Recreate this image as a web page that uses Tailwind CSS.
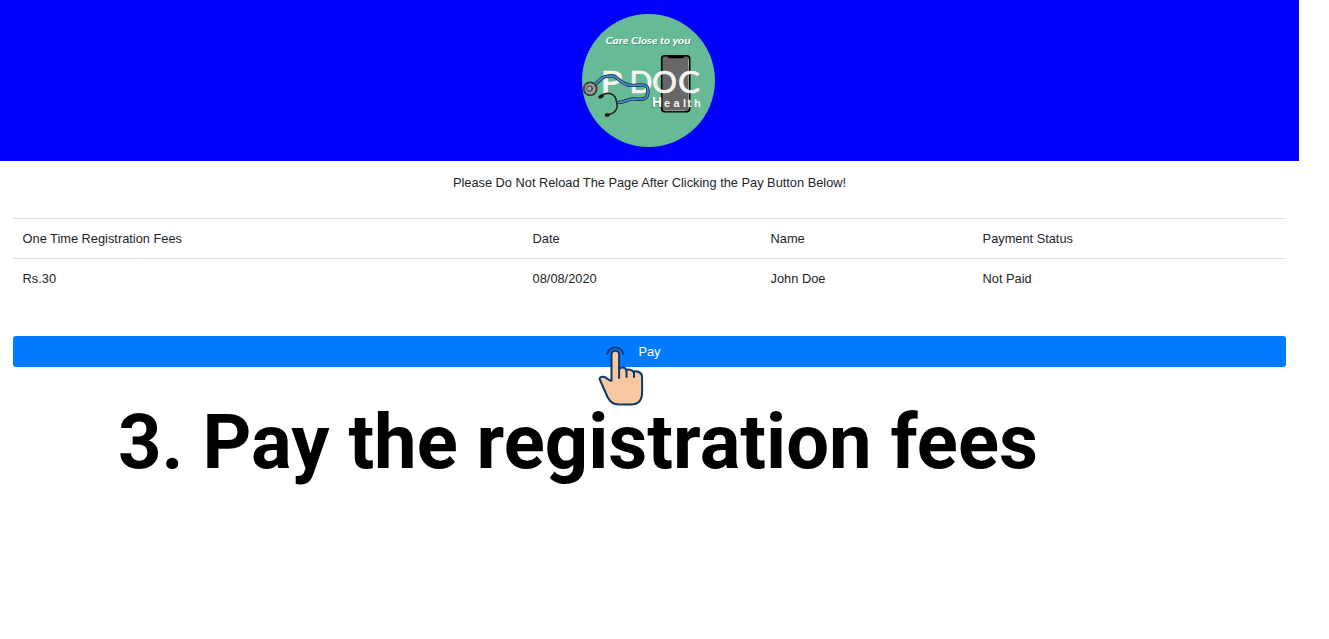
<!DOCTYPE html>
<html lang="en">
<head>
<meta charset="utf-8">
<title>P DOC Health</title>
<script src="https://cdn.jsdelivr.net/npm/@tailwindcss/browser@4"></script>
</head>
<body class="h-[639px] overflow-hidden bg-white font-['Liberation_Sans',sans-serif] text-[12.8px] leading-[19px] text-[#212529]">
<div class="w-[1299px]">
  <header class="flex h-[161px] justify-center bg-[#0000ff] pt-[14px] pr-[2px]">
    <svg class="h-[133px] w-[133px]" viewBox="582 14 133 133" fill="none" stroke-linecap="round" stroke-linejoin="round">
      <defs>
        <radialGradient id="disc"><stop offset="0" stop-color="#ddd"/><stop offset=".35" stop-color="#777"/><stop offset=".6" stop-color="#aaa"/><stop offset="1" stop-color="#333"/></radialGradient>
      </defs>
      <circle cx="648.5" cy="80.5" r="66.5" fill="#66bb96"/>
      <g font-family="Lato, sans-serif" font-style="italic" font-weight="700" font-size="10">
        <text x="606.5" y="45" fill="#4d9777" textLength="85" lengthAdjust="spacingAndGlyphs">Care Close to you</text>
        <text x="605.5" y="44" fill="#fff" textLength="85" lengthAdjust="spacingAndGlyphs">Care Close to you</text>
      </g>
      <rect x="661.7" y="55.7" width="28" height="56" rx="3" fill="#666" stroke="#000" stroke-width="1.6"/>
      <path d="M667 56h18l-2 2.2h-14z" fill="#000"/>
      <path d="M688.5 59.500v49M665 110.700h20" stroke="#ccc" stroke-width=".6"/>
      <g fill="#f5f5f3" stroke="#f5f5f3" stroke-width=".7" font-family="Lato, sans-serif" font-size="31">
        <text x="600.5" y="93" textLength="22" lengthAdjust="spacingAndGlyphs">P</text>
        <text x="629.5" y="93" textLength="23" lengthAdjust="spacingAndGlyphs">D</text>
        <text x="652" y="93" textLength="25" lengthAdjust="spacingAndGlyphs">O</text>
        <text x="678" y="93" textLength="22" lengthAdjust="spacingAndGlyphs">C</text>
      </g>
      <path d="M593 87C600 80 601 76.500 609 76C619 75 617 82 628 85C636 87 648 81 648 91C648 99 644 100 635 99C628 98 625 103 618 102.500" stroke="#182636" stroke-width="3.400"/>
      <path d="M593 87C600 80 601 76.500 609 76C619 75 617 82 628 85C636 87 648 81 648 91C648 99 644 100 635 99C628 98 625 103 618 102.500" stroke="#448bd0" stroke-width="2"/>
      <path d="M601 96.500C607 90 616 94 616.500 102C619 109 614 114 607.500 114.500" stroke="#222" stroke-width="1.500"/>
      <path d="M600 97l2-1M606.500 115h1.500" stroke="#171717" stroke-width="3.500"/>
      <circle cx="590.2" cy="88.800" r="7.200" fill="url(#disc)"/>
      <circle cx="590.2" cy="88.800" r="6.400" stroke="#333" stroke-width="1.300" stroke-dasharray="3 2"/>
      <circle cx="589.5" cy="88.500" r="2.700" fill="#aaa" stroke="#222" stroke-width=".8"/>
      <g font-family="'Liberation Sans', sans-serif" font-weight="700">
        <g fill="#417d67"><text x="651" y="108" font-size="15" textLength="11" lengthAdjust="spacingAndGlyphs">H</text></g>
        <text x="652" y="107" font-size="14.500" fill="#fff" textLength="10" lengthAdjust="spacingAndGlyphs">H</text>
        <text y="107" font-size="11" fill="#f4f4f4" x="664 673.5 683 687.5 694">ealth</text>
      </g>
    </svg>
  </header>

  <main class="px-[13px] pt-[12px]">
    <p class="text-center">Please Do Not Reload The Page After Clicking the Pay Button Below!</p>
    <table class="mt-[26px] w-full table-fixed border-collapse text-left">
      <colgroup><col class="w-[510px]"><col class="w-[238px]"><col class="w-[212px]"><col class="w-[313px]"></colgroup>
      <tbody>
        <tr class="h-[40px] border-t border-[#dee2e6]"><td class="pl-[9.6px]">One Time Registration Fees</td><td class="pl-[9.6px]">Date</td><td class="pl-[9.6px]">Name</td><td class="pl-[9.6px]">Payment Status</td></tr>
        <tr class="h-[40px] border-t border-[#dee2e6]"><td class="pl-[9.6px]">Rs.30</td><td class="pl-[9.6px]">08/08/2020</td><td class="pl-[9.6px]">John Doe</td><td class="pl-[9.6px]">Not Paid</td></tr>
      </tbody>
    </table>
    <div class="relative mt-[37px]">
      <button class="block h-[31px] w-full rounded-[3px] bg-[#007bff] text-white">Pay</button>
      <svg class="absolute top-[9px] left-[584px] h-[62px] w-[48px]" viewBox="597 344 48 62" fill="none" stroke="#0d3a66" stroke-width="2" stroke-linecap="round" stroke-linejoin="round">
        <path d="M611.500 378V353.500a3.800 3.800 0 0 1 7.600 0V368.500c1.500-3 6.500-2.500 7 .700c2-1.500 6-.500 7 1.600c3-1.300 9 0 9 5.200V391c0 8-4 12.500-11 12.500H619c-6 0-9-2.500-11.500-7.500L600 379c-1.500-2 1.500-4 4.500-3c3 1 4 3.500 7 3.800z" fill="#f7c8a2"/>
        <path d="M619.100 367v10M626.500 369v7M634 370.500v5.500M607.300 353a8.200 8.200 0 0 1 16 0"/>
      </svg>
    </div>
  </main>
  <h1 class="mt-[31px] pl-[118px] font-['Roboto',sans-serif] text-[76px] leading-[89px] font-bold whitespace-nowrap text-black">3. Pay the registration fees</h1>
</div>
</body>
</html>
